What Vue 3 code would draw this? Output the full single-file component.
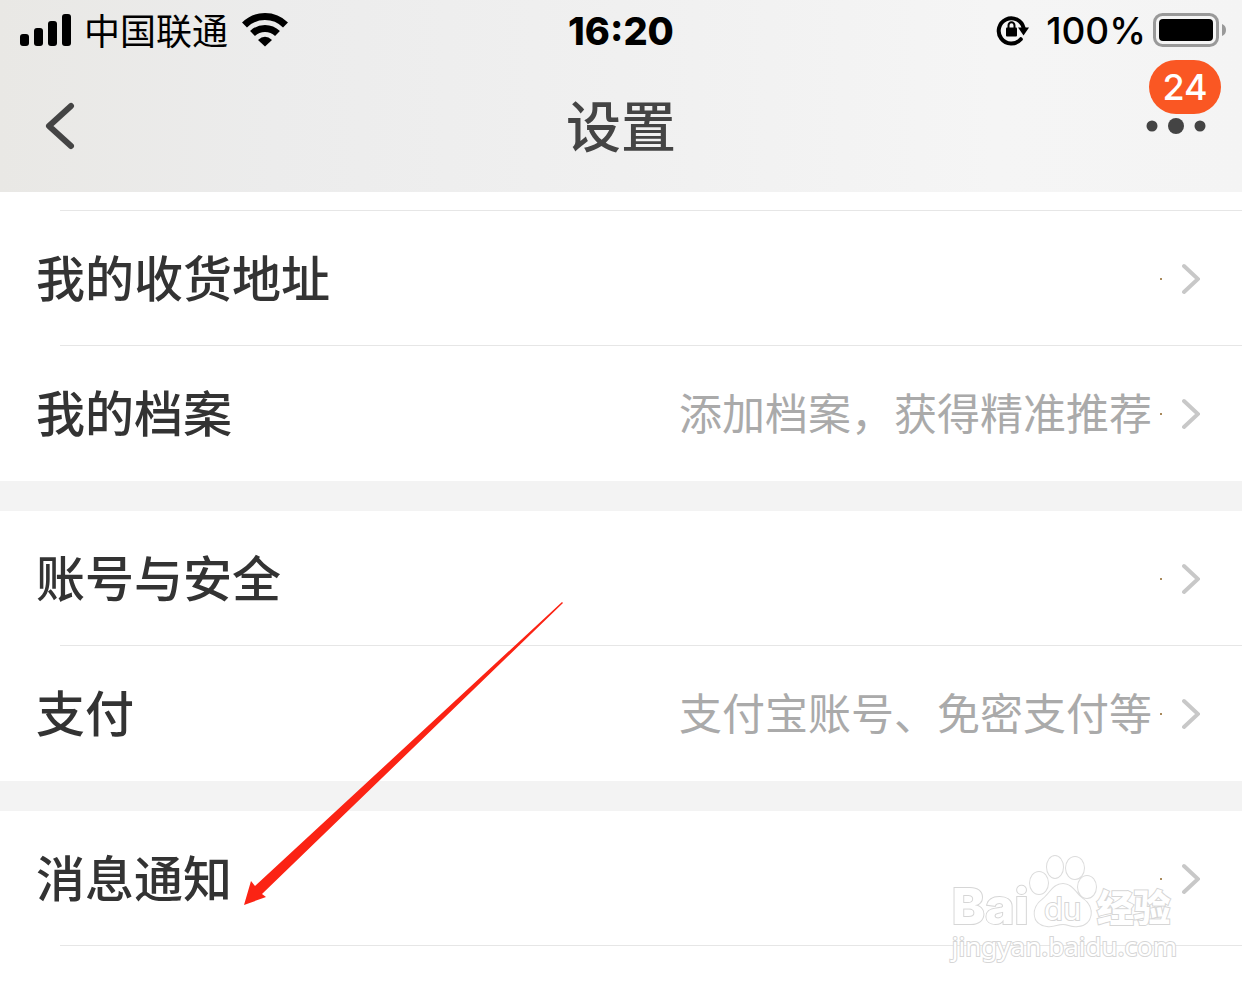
<script setup>
import { ref } from 'vue'

const unread = ref(24)

const groups = [
  [
    { label: '我的收货地址', value: '' },
    { label: '我的档案', value: '添加档案，获得精准推荐' }
  ],
  [
    { label: '账号与安全', value: '' },
    { label: '支付', value: '支付宝账号、免密支付等' }
  ],
  [
    { label: '消息通知', value: '' }
  ]
]
</script>

<template>
  <div class="page">
    <header class="header">
      <div class="status-bar">
        <div class="status-left">
          <svg class="signal" width="52" height="34" viewBox="0 0 52 34">
            <rect x="0" y="21" width="9" height="12" rx="3" />
            <rect x="14" y="15" width="9" height="18" rx="3" />
            <rect x="28" y="8" width="9" height="25" rx="3" />
            <rect x="42" y="1" width="9" height="32" rx="3" />
          </svg>
          <span class="carrier">中国联通</span>
          <svg class="wifi" width="46" height="34" viewBox="0 0 46 34">
            <path d="M2.500 12A29 29 0 0 1 43.500 12" class="wave" />
            <path d="M10.500 20.500A18 18 0 0 1 35.500 20.500" class="wave" />
            <path d="M23 33.500L16 27Q23 20.500 30 27Z" />
          </svg>
        </div>
        <span class="time">16:20</span>
        <div class="status-right">
          <svg class="lock" width="34" height="32" viewBox="0 0 34 32">
            <path d="M24.800 25.200A12.600 12.600 0 1 1 27.600 14" class="ring" />
            <path d="M22 13.500H33L27.500 21.500Z" />
            <rect x="10" y="13.500" width="11" height="9" rx="1" />
            <path d="M12.500 14V11.500A3 3.200 0 0 1 18.500 11.500V14" class="shackle" />
          </svg>
          <span class="percent">100%</span>
          <svg class="battery" width="73" height="34" viewBox="0 0 73 34">
            <rect x="1.500" y="1.500" width="63" height="31" rx="8" class="shell" />
            <rect x="6" y="6" width="54" height="22" rx="4" />
            <path d="M69 11Q73 12.500 73 17T69 23Z" class="cap" />
          </svg>
        </div>
      </div>

      <nav class="nav-bar">
        <button class="nav-button back" type="button" aria-label="返回">
          <svg width="30" height="48" viewBox="0 0 30 48">
            <path d="M26 4L4 24L26 44" />
          </svg>
        </button>
        <h1 class="title">设置</h1>
        <button class="nav-button more" type="button" aria-label="更多">
          <svg width="60" height="18" viewBox="0 0 60 18">
            <circle cx="6" cy="9" r="5.500" />
            <circle cx="30" cy="9" r="8" />
            <circle cx="54" cy="9" r="5.500" />
          </svg>
          <span class="badge">{{ unread }}</span>
        </button>
      </nav>
    </header>

    <main class="settings">
      <div class="previous-row"></div>
      <ul v-for="(group, index) in groups" :key="index" class="group">
        <li v-for="item in group" :key="item.label" class="item">
          <a class="row" href="#">
            <span class="label">{{ item.label }}</span>
            <span class="value">{{ item.value }}</span>
            <span class="dot"></span>
            <svg class="chevron" width="18" height="32" viewBox="0 0 18 32">
              <path d="M2 3L16 16L2 29" />
            </svg>
          </a>
        </li>
      </ul>
    </main>

    <svg class="arrow" width="320" height="304" viewBox="0 0 320 304">
      <path d="M0 303L7 279L11 284L318 0L319 1L18 292L22 295Z" />
    </svg>

    <div class="watermark">
      <div class="brand">
        <span class="brand-latin">Bai</span>
        <span class="paw">
          <svg width="68" height="74" viewBox="0 0 68 74">
            <ellipse cx="10" cy="29" rx="9" ry="11" />
            <ellipse cx="26" cy="13" rx="8" ry="11" />
            <ellipse cx="46" cy="14" rx="9" ry="11" />
            <ellipse cx="58" cy="33" rx="9" ry="11" />
            <path d="M34 30C43 30 46 39 54 45C66 53 64 71 49 72C42 73 39 70 34 70C28 70 25 73 18 72C2 70 3 53 13 46C21 40 24 30 34 30Z" />
          </svg>
          <span class="paw-text">du</span>
        </span>
        <span class="brand-chinese">经验</span>
      </div>
      <span class="site">jingyan.baidu.com</span>
    </div>
  </div>
</template>

<style>
body {
  margin: 0;
  background: #fff;
}
</style>

<style scoped>
.page {
  position: relative;
  min-height: 100vh;
  overflow: hidden;
  background: #fff;
  color: #333;
  font-family: "Noto Sans CJK SC", sans-serif;
}

.header {
  background: linear-gradient(90deg, #e9e8e5 0%, #ececec 22%, #f0f0f0 50%, #f5f5f5 80%, #f4f4f4 100%);
}

.status-bar {
  display: grid;
  grid-template-columns: 1fr auto 1fr;
  align-items: center;
  height: 60px;
  padding: 0 16px;
  color: #000;
  font-size: 36px;
  line-height: 62px;
}

.status-bar svg {
  margin-bottom: 2px;
}

.status-left,
.status-right {
  display: flex;
  align-items: center;
}

.status-right {
  justify-content: flex-end;
}

.signal {
  margin-left: 4px;
}

.carrier {
  margin: 0 14px 0 12px;
  line-height: 58px;
  padding-bottom: 4px;
}

.wave {
  fill: none;
  stroke: #000;
  stroke-width: 7;
}

.time {
  font-family: Inter, sans-serif;
  font-size: 38px;
  font-weight: 800;
}

.ring {
  fill: none;
  stroke: #000;
  stroke-width: 4;
  stroke-linecap: round;
}

.shackle {
  fill: none;
  stroke: #000;
  stroke-width: 2;
}

.percent {
  margin: 0 7px 0 16px;
  font-family: Inter, sans-serif;
  font-size: 37px;
  font-weight: 500;
}

.shell {
  fill: none;
  stroke: #999;
  stroke-width: 3;
}

.cap {
  fill: #999;
}

.nav-bar {
  display: grid;
  grid-template-columns: 1fr auto 1fr;
  align-items: center;
  height: 132px;
  padding: 0 36px;
}

.nav-button {
  position: relative;
  display: flex;
  padding: 0;
  border: 0;
  background: none;
  cursor: pointer;
}

.back {
  justify-self: start;
  margin-left: 9px;
}

.back path {
  fill: none;
  stroke: #444;
  stroke-width: 6;
  stroke-linecap: round;
  stroke-linejoin: round;
}

.title {
  margin: 0;
  padding-bottom: 6px;
  color: #444;
  font-size: 55px;
  font-weight: 500;
  line-height: 80px;
}

.more {
  justify-self: end;
  fill: #444;
}

.badge {
  position: absolute;
  right: -15px;
  bottom: 21px;
  width: 72px;
  border-radius: 27px;
  background: #fa5723;
  color: #fff;
  font-family: Inter, sans-serif;
  font-size: 36px;
  font-weight: 500;
  line-height: 54px;
  text-align: center;
}

.previous-row {
  height: 18px;
  margin-left: 60px;
  border-bottom: 1px solid #e6e6e6;
}

.group {
  margin: 0;
  padding: 0;
  list-style: none;
}

.group + .group {
  border-top: 30px solid #f3f3f3;
}

.row {
  position: relative;
  display: flex;
  align-items: center;
  height: 135px;
  padding: 0 42px 0 36px;
  color: inherit;
  text-decoration: none;
}

.item:not(:last-child) .row::after,
.group:last-child .row::after {
  content: "";
  position: absolute;
  right: 0;
  bottom: 0;
  left: 60px;
  height: 1px;
  background: #e6e6e6;
}

.label {
  flex: 1;
  padding-bottom: 6px;
  font-size: 49px;
  font-weight: 500;
  line-height: 72px;
}

.value {
  padding-bottom: 6px;
  color: #aaa;
  font-size: 43px;
  line-height: 64px;
}

.dot {
  width: 2px;
  height: 2px;
  margin: 0 20px 0 8px;
  background: #a98a5c;
}

.chevron path {
  fill: none;
  stroke: #c8c8c8;
  stroke-width: 4;
  stroke-linecap: round;
}

/* pointer drawn over the list */
.arrow {
  position: absolute;
  top: 602px;
  left: 244px;
  fill: #fb2314;
  pointer-events: none;
}

.watermark {
  position: absolute;
  top: 854px;
  right: 65px;
  display: flex;
  flex-direction: column;
  color: #fff;
  pointer-events: none;
  paint-order: stroke fill;
  -webkit-text-stroke: 2px #d6d6d6;
}

.brand {
  display: flex;
  align-items: flex-end;
  height: 74px;
}

.brand-latin {
  font-family: Inter, sans-serif;
  font-size: 50px;
  font-weight: 800;
  line-height: 44px;
}

.paw {
  position: relative;
  display: flex;
}

.paw svg {
  fill: #fff;
  stroke: #dcdcdc;
  stroke-width: 2;
}

.paw-text {
  position: absolute;
  right: 0;
  bottom: 1px;
  left: 0;
  font-family: Inter, sans-serif;
  font-size: 31px;
  line-height: 36px;
  text-align: center;
}

.brand-chinese {
  font-size: 37px;
  font-weight: 900;
  line-height: 44px;
}

.site {
  font-family: "Noto Sans", sans-serif;
  font-size: 26px;
  line-height: 36px;
}
</style>
